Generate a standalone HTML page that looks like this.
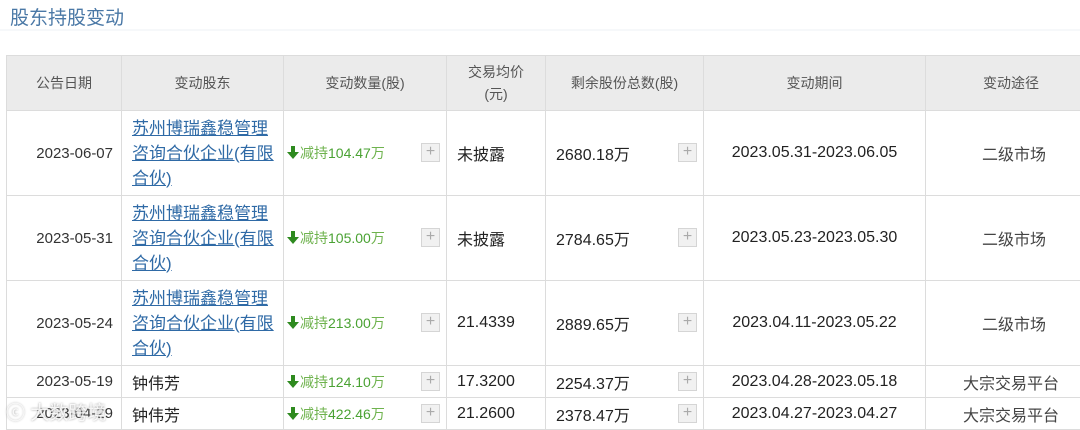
<!DOCTYPE html>
<html><head><meta charset="utf-8"><style>
*{margin:0;padding:0;box-sizing:border-box}
body{width:1080px;height:428px;overflow:hidden;background:#fff;font-family:"Liberation Sans","Noto Sans CJK SC",sans-serif;position:relative}
.title{position:absolute;left:10px;top:3px;font-size:19px;color:#4a78a6}
.tline{position:absolute;left:0;top:29px;width:1080px;height:2px;background:#f6f8fa}
table{position:absolute;left:6px;top:55px;border-collapse:collapse;table-layout:fixed;width:1090px}
td,th{border:1px solid #dcdcdc;font-size:16px;color:#222;font-weight:normal;vertical-align:middle}
th{background:#ebebeb;color:#555;height:55px;font-size:14px;text-align:center;line-height:22px}
tr.b td{height:85px}
tr.s td{height:32px}
.c{text-align:center}.r{text-align:right;padding-right:8px;font-size:15px;color:#333}
.l{padding-left:10px}
a{color:#2f6aa6;text-decoration:underline;font-size:17px;line-height:25px;display:block;margin-left:10px;width:142px}
.g{color:#4aa233;font-size:14px;position:relative;padding-left:3px}
.g b{font-weight:normal;color:#6fb34e}
.arr{display:inline-block;width:12px;height:13px;vertical-align:-1px;margin-right:1px}
.pl{position:absolute;right:6px;top:50%;margin-top:-10px;width:19px;height:19px;border:1px solid #d5d5d5;background:#f1f1f1;color:#aaa;font-size:16px;line-height:16px;text-align:center}
.rel{position:relative}
.wm{position:absolute;left:6px;top:398px;color:rgba(255,255,255,.85);font-size:19px;text-shadow:0 0 2px #999}
.m1{padding-left:56px;color:#444}.m2{padding-left:37px;color:#444}
</style></head><body>
<div class="title">股东持股变动</div><div class="tline"></div>
<table>
<colgroup><col style="width:115px"><col style="width:162px"><col style="width:163px"><col style="width:99px"><col style="width:158px"><col style="width:222px"><col style="width:171px"></colgroup>
<tr><th>公告日期</th><th>变动股东</th><th>变动数量(股)</th><th>交易均价<br>(元)</th><th>剩余股份总数(股)</th><th>变动期间</th><th style="text-align:left;padding-left:57px">变动途径</th></tr>
<tr class="b"><td class="r">2023-06-07</td><td><a>苏州博瑞鑫稳管理咨询合伙企业(有限合伙)</a></td><td class="rel g"><svg class="arr" viewBox="0 0 12 13"><path d="M4 0h4v6h4L6 13 0 6h4z" fill="#2e8a1f"/></svg><b>减持</b>104.47<b>万</b><span class="pl">+</span></td><td class="l">未披露</td><td class="l rel">2680.18万<span class="pl">+</span></td><td class="c">2023.05.31-2023.06.05</td><td class="m1">二级市场</td></tr>
<tr class="b"><td class="r">2023-05-31</td><td><a>苏州博瑞鑫稳管理咨询合伙企业(有限合伙)</a></td><td class="rel g"><svg class="arr" viewBox="0 0 12 13"><path d="M4 0h4v6h4L6 13 0 6h4z" fill="#2e8a1f"/></svg><b>减持</b>105.00<b>万</b><span class="pl">+</span></td><td class="l">未披露</td><td class="l rel">2784.65万<span class="pl">+</span></td><td class="c">2023.05.23-2023.05.30</td><td class="m1">二级市场</td></tr>
<tr class="b"><td class="r">2023-05-24</td><td><a>苏州博瑞鑫稳管理咨询合伙企业(有限合伙)</a></td><td class="rel g"><svg class="arr" viewBox="0 0 12 13"><path d="M4 0h4v6h4L6 13 0 6h4z" fill="#2e8a1f"/></svg><b>减持</b>213.00<b>万</b><span class="pl">+</span></td><td class="l">21.4339</td><td class="l rel">2889.65万<span class="pl">+</span></td><td class="c">2023.04.11-2023.05.22</td><td class="m1">二级市场</td></tr>
<tr class="s"><td class="r">2023-05-19</td><td class="l">钟伟芳</td><td class="rel g"><svg class="arr" viewBox="0 0 12 13"><path d="M4 0h4v6h4L6 13 0 6h4z" fill="#2e8a1f"/></svg><b>减持</b>124.10<b>万</b><span class="pl">+</span></td><td class="l">17.3200</td><td class="l rel">2254.37万<span class="pl">+</span></td><td class="c">2023.04.28-2023.05.18</td><td class="m2">大宗交易平台</td></tr>
<tr class="s"><td class="r">2023-04-29</td><td class="l">钟伟芳</td><td class="rel g"><svg class="arr" viewBox="0 0 12 13"><path d="M4 0h4v6h4L6 13 0 6h4z" fill="#2e8a1f"/></svg><b>减持</b>422.46<b>万</b><span class="pl">+</span></td><td class="l">21.2600</td><td class="l rel">2378.47万<span class="pl">+</span></td><td class="c">2023.04.27-2023.04.27</td><td class="m2">大宗交易平台</td></tr>
</table>
<div class="wm">ⓒ 大数跨境</div>
</body></html>
